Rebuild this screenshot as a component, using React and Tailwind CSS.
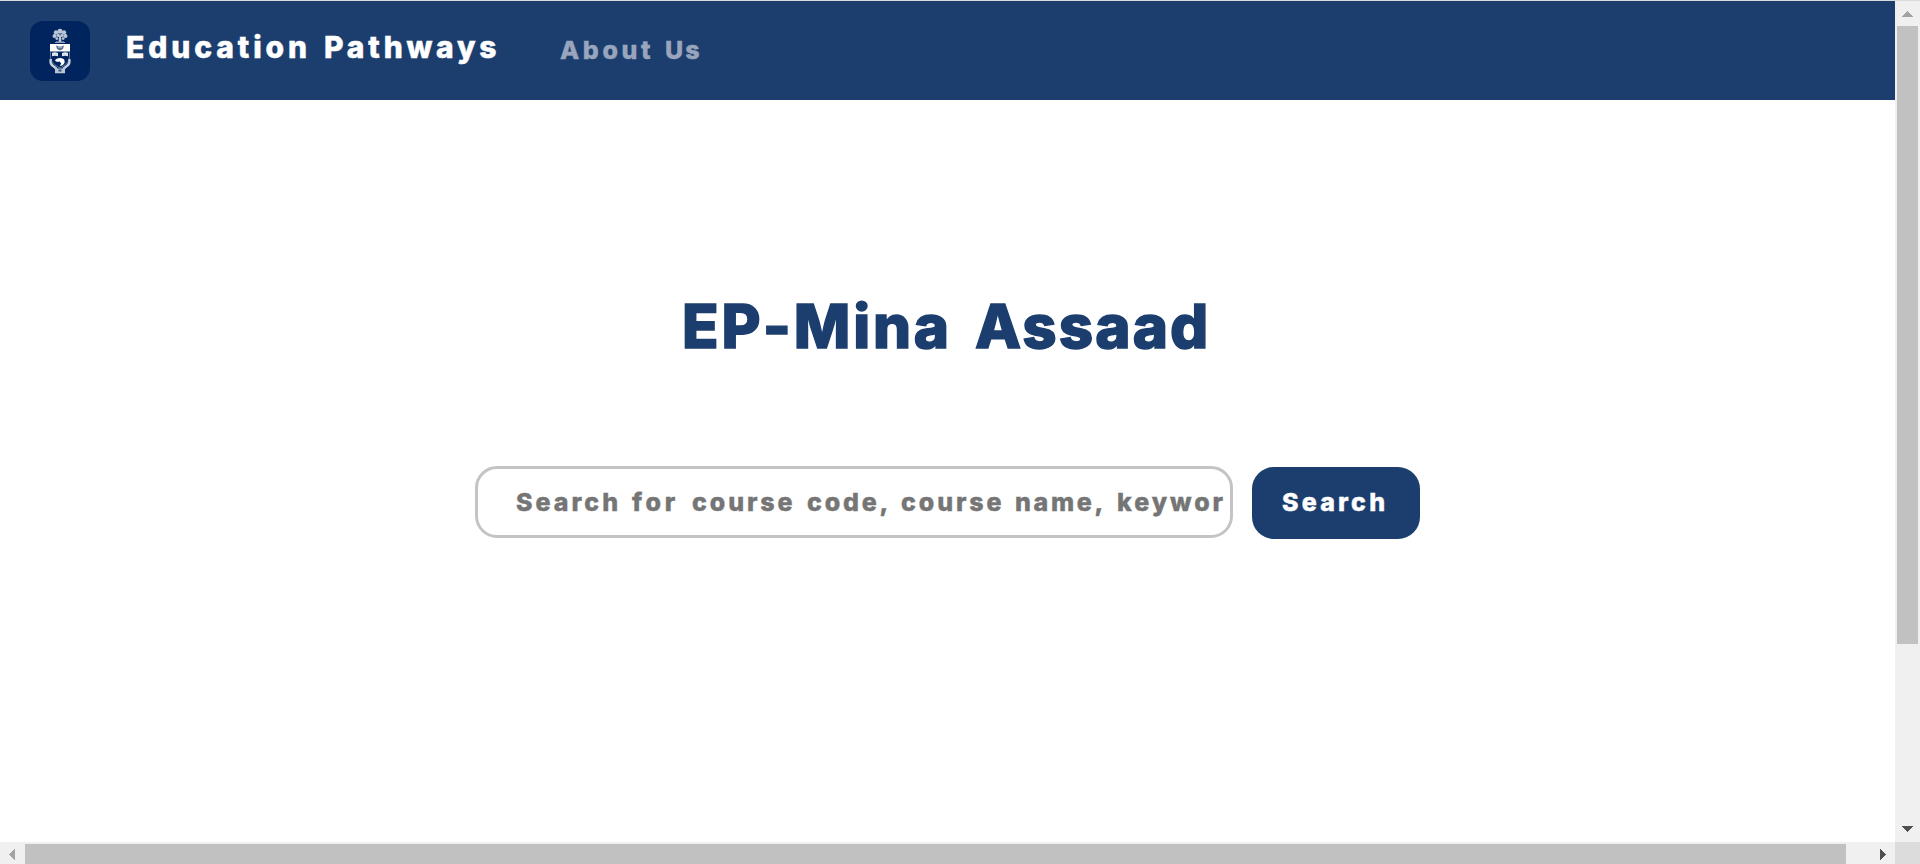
const titleWords = [
  { text: "Education", cls: "w-[198px] tracking-[3.9px]" },
  { text: "Pathways", cls: "w-[180px] tracking-[3.8px]" },
];

const hintWords = [
  { text: "Search", cls: "w-[116px] tracking-[3px]" },
  { text: "for", cls: "w-[60px] tracking-[3.8px]" },
  { text: "course", cls: "w-[115px] tracking-[2.9px]" },
  { text: "code,", cls: "w-[94px] tracking-[2.8px]" },
  { text: "course", cls: "w-[114px] tracking-[2.9px]" },
  { text: "name,", cls: "w-[102px] tracking-[2.7px]" },
  { text: "keywor", cls: "w-[108px] tracking-[2.9px]" },
];

function Crest() {
  return (
    <svg viewBox="0 0 60 60" className="h-[60px] w-[60px] shrink-0" aria-hidden="true">
      <rect width="60" height="60" rx="13" fill="#00245d" />
      <g fill="#b9c6d8">
        <circle cx="30" cy="10.2" r="2.5" />
        <circle cx="26" cy="11.4" r="2.2" />
        <circle cx="34" cy="11.4" r="2.2" />
        <circle cx="24.6" cy="15" r="2.1" />
        <circle cx="35.4" cy="15" r="2.1" />
        <circle cx="28.3" cy="14.4" r="1.7" />
        <circle cx="31.9" cy="14.4" r="1.7" />
        <circle cx="26.8" cy="17.6" r="1.4" />
        <circle cx="33.2" cy="17.6" r="1.4" />
        <path d="M29 15h2l.5 6h-3z" />
      </g>
      <path d="M25 21.5h10M27 20v2M33 20v2" stroke="#8fa3bf" strokeWidth="1.2" />
      <path d="M20 23h20v7.5H20z" fill="#fff" />
      <path d="M26 24.5c2 1 6 1 8 0l-1 3.5-3 1.6-3-1.6z" fill="#5c7397" />
      <path d="M28 26h4" stroke="#dce4ee" strokeWidth="1" />
      <path d="M22 31.8c2-.8 4-.8 6 .2v3.2c-2-.7-4-.7-6 0zM32 32c2-1 4-1 6-.2v3.4c-2-.7-4-.7-6 0z" fill="#dce4ee" />
      <path d="M20.500 31v4c0 6 4 9 9.500 12 5.500-3 9.500-6 9.500-12v-4" fill="none" stroke="#7089ac" strokeWidth=".8" />
      <path d="M25 39.500c1-2.800 6-3.400 8.500-1.500 2.200 2 1 5.500-1.500 6.500l-2.300.5 1.500-2.400-1.500-2.200c-1.500.8-3.900.4-4.700-.9z" fill="#fff" />
      <path d="M20.800 38c-1 3.500.5 6 3 7.500l3 2.500M39.200 38c1 3.500-.5 6-3 7.500L33.200 48" fill="none" stroke="#c8d3e1" strokeWidth="2.400" />
      <path d="M25 46l2.500 1.500h5L35 46v6.200H25z" fill="#b9c6d8" />
      <path d="M28.500 48.500h3v2h-3z" fill="#31507c" />
    </svg>
  );
}

function Navbar() {
  return (
    <nav className="flex h-[99px] shrink-0 items-start bg-[#1c3e6e] pl-[30px]">
      <div className="pt-5">
        <Crest />
      </div>
      <div className="ml-[36px] mt-[28px] flex text-[30px] leading-9 text-white [-webkit-text-stroke:0.5px_white]">
        {titleWords.map((w) => (
          <span key={w.text} className={w.cls}>{w.text}</span>
        ))}
      </div>
      <div className="ml-[56px] mt-[34px] flex text-[25px] leading-[30px] text-[#98a5bd] [-webkit-text-stroke:0.4px_#98a5bd]">
        <span className="w-[105px] tracking-[3.6px]">About</span>
        <span className="tracking-[2px]">Us</span>
      </div>
    </nav>
  );
}

function SearchBar() {
  return (
    <div className="mt-[103px] flex items-start pl-[475px] text-[25px] leading-[30px]">
      <div className="flex h-[72px] w-[758px] items-center overflow-hidden whitespace-nowrap rounded-[22px] border-3 border-[#c4c4c4] pl-[38px] text-[#757575] [-webkit-text-stroke:0.4px_#757575]">
        {hintWords.map((w, i) => (
          <span key={i} className={`shrink-0 ${w.cls}`}>{w.text}</span>
        ))}
      </div>
      <button className="ml-[19px] mt-px h-[72px] w-[168px] rounded-[22px] bg-[#1c3e6e] pb-[2px] pl-[30px] text-left tracking-[3.2px] text-white [-webkit-text-stroke:0.4px_white]">
        Search
      </button>
    </div>
  );
}

function VerticalScrollbar() {
  return (
    <div className="flex w-[25px] shrink-0 flex-col items-center bg-[#f0f0f0]">
      <svg viewBox="0 0 25 25" className="h-[25px] w-[25px] shrink-0" shapeRendering="crispEdges">
        <path d="M12.500 10L18 16H7z" fill="#a3a3a3" />
      </svg>
      <div className="h-[618px] w-[21px] bg-[#c1c1c1]" />
      <svg viewBox="0 0 25 25" className="mt-auto h-[25px] w-[25px] shrink-0" shapeRendering="crispEdges">
        <path d="M7 9h11l-5.500 6z" fill="#505050" />
      </svg>
    </div>
  );
}

function HorizontalScrollbar() {
  return (
    <div className="flex h-[22px] shrink-0 bg-[#f0f0f0]">
      <svg viewBox="0 0 25 22" className="h-[22px] w-[25px] shrink-0" shapeRendering="crispEdges">
        <path d="M15 7v11L9 12.500z" fill="#a3a3a3" />
      </svg>
      <div className="mt-[2px] h-5 w-[1821px] bg-[#c1c1c1]" />
      <svg viewBox="0 0 25 22" className="ml-6 h-[22px] w-[25px] shrink-0" shapeRendering="crispEdges">
        <path d="M10 7v11l6-5.500z" fill="#505050" />
      </svg>
      <div className="ml-auto h-[22px] w-[25px] bg-[#dcdcdc]" />
    </div>
  );
}

export default function App() {
  return (
    <div className="flex h-[864px] w-[1920px] flex-col overflow-hidden border-t border-[#d9dbdd] bg-white font-['Inter',sans-serif] font-extrabold">
      <div className="flex h-[841px] shrink-0">
        <main className="flex w-[1895px] flex-col">
          <Navbar />
          <h1 className="mt-[189px] flex pl-[682px] text-[60px] leading-[74px] text-[#1c3e6e] [-webkit-text-stroke:1.4px_#1c3e6e]">
            <span className="w-[293px] tracking-[2.8px]">EP-Mina</span>
            <span className="tracking-[2.1px]">Assaad</span>
          </h1>
          <SearchBar />
        </main>
        <VerticalScrollbar />
      </div>
      <HorizontalScrollbar />
    </div>
  );
}
